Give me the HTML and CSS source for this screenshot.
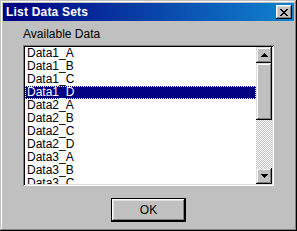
FILE: index.html
```html
<!DOCTYPE html>
<html lang="en">
<head>
  <meta charset="UTF-8">
  <title>List Data Sets</title>
  <link rel="stylesheet" href="styles.css">
</head>
<body>

  <div class="window">
    <div class="titlebar">
      <span class="title">List Data Sets</span>
      <button class="close-btn">
        <svg width="8" height="7" viewBox="0 0 8 7" shape-rendering="crispEdges">
          <path d="M0 0h2v1h-2z M6 0h2v1h-2z M1 1h2v1h-2z M5 1h2v1h-2z M2 2h4v1h-4z M3 3h2v1h-2z M2 4h4v1h-4z M1 5h2v1h-2z M5 5h2v1h-2z M0 6h2v1h-2z M6 6h2v1h-2z" fill="#000"/>
        </svg>
      </button>
    </div>

    <div class="content">
      <div class="label">Available Data</div>
      <div class="listbox">
        <ul class="items">
          <li>Data1_A</li>
          <li>Data1_B</li>
          <li>Data1_C</li>
          <li class="selected">Data1_D</li>
          <li>Data2_A</li>
          <li>Data2_B</li>
          <li>Data2_C</li>
          <li>Data2_D</li>
          <li>Data3_A</li>
          <li>Data3_B</li>
          <li>Data3_C</li>
        </ul>
        <div class="scrollbar">
          <div class="sb-btn">
            <svg width="7" height="4" viewBox="0 0 7 4" shape-rendering="crispEdges">
              <path d="M3 0h1v1h1v1h1v1h1v1H0V3h1V2h1V1h1z" fill="#000"/>
            </svg>
          </div>
          <div class="sb-thumb"></div>
          <div class="sb-track"></div>
          <div class="sb-btn">
            <svg width="7" height="4" viewBox="0 0 7 4" shape-rendering="crispEdges">
              <path d="M0 0h7v1h-1v1h-1v1h-1v1h-1V3h-1V2h-1V1H0z" fill="#000"/>
            </svg>
          </div>
        </div>
      </div>

      <div class="footer">
        <button class="ok-btn">OK</button>
      </div>
    </div>
  </div>

</body>
</html>
```

FILE: styles.css
```css
body {
  margin: 0;
  background: #c0c0c0;
  font-family: "Liberation Sans", Arial, sans-serif;
  font-size: 11px;
}

.window {
  width: 297px;
  height: 231px;
  box-sizing: border-box;
  padding: 3px;
  background: #c0c0c0;
  box-shadow: inset -1px -1px #000, inset 1px 1px #c0c0c0,
              inset -2px -2px #808080, inset 2px 2px #fff;
}

.titlebar {
  height: 18px;
  display: flex;
  align-items: center;
  justify-content: space-between;
  padding: 0 2px 0 3px;
  background: linear-gradient(90deg, #000080, #1084d0);
}

.title {
  color: #fff;
  font-weight: bold;
  font-size: 12px;
  letter-spacing: 0.2px;
}

.close-btn {
  width: 16px;
  height: 14px;
  padding: 0;
  border: none;
  background: #c0c0c0;
  display: flex;
  align-items: center;
  justify-content: center;
  box-shadow: inset -1px -1px #000, inset 1px 1px #fff,
              inset -2px -2px #808080, inset 2px 2px #dfdfdf;
}

.content {
  padding: 7px 20px 0 20px;
}

.label {
  height: 13px;
  line-height: 13px;
  margin-bottom: 4px;
  color: #000;
  font-size: 12px;
}

.listbox {
  height: 141px;
  box-sizing: border-box;
  padding: 2px;
  display: flex;
  background: #fff;
  box-shadow: inset 1px 1px #808080, inset -1px -1px #fff,
              inset 2px 2px #000, inset -2px -2px #dfdfdf;
}

.items {
  flex: 1;
  margin: 0;
  padding: 0;
  list-style: none;
  overflow: hidden;
}

.items li {
  height: 13px;
  line-height: 13px;
  padding-left: 2px;
  color: #000;
  font-size: 12px;
}

.items li.selected {
  background: #000080;
  color: #fff;
  outline: 1px dotted #ffff80;
  outline-offset: -1px;
}

.scrollbar {
  width: 16px;
  display: flex;
  flex-direction: column;
}

.sb-btn {
  height: 16px;
  display: flex;
  align-items: center;
  justify-content: center;
  background: #c0c0c0;
  box-shadow: inset -1px -1px #000, inset 1px 1px #dfdfdf,
              inset -2px -2px #808080, inset 2px 2px #fff;
}

.sb-thumb {
  height: 57px;
  background: #c0c0c0;
  box-shadow: inset -1px -1px #000, inset 1px 1px #dfdfdf,
              inset -2px -2px #808080, inset 2px 2px #fff;
}

.sb-track {
  flex: 1;
  background: repeating-conic-gradient(#c0c0c0 0 25%, #fff 0 50%) 0 0 / 2px 2px;
}

.footer {
  display: flex;
  justify-content: center;
  margin-top: 12px;
}

.ok-btn {
  width: 75px;
  height: 24px;
  padding: 0;
  border: 1px solid #000;
  background: #c0c0c0;
  font-family: "Liberation Sans", Arial, sans-serif;
  font-size: 12px;
  color: #000;
  box-shadow: inset -1px -1px #000, inset 1px 1px #fff,
              inset -2px -2px #808080, inset 2px 2px #dfdfdf;
}
```
